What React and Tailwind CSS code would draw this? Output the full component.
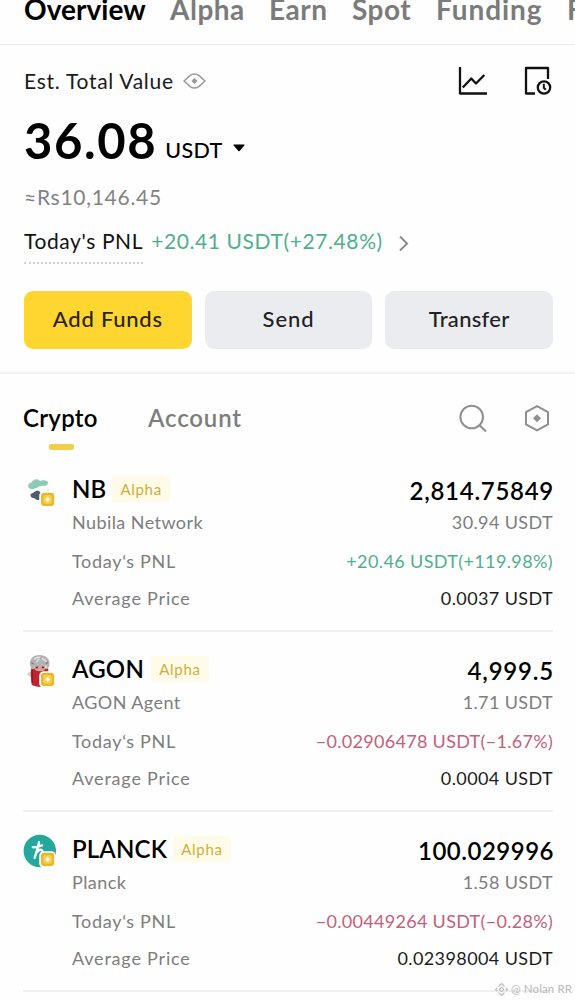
import React from "react";

const tabs = [
  ["Overview", "w-[146px] text-black tracking-[0.05px]"],
  ["Alpha", "w-[99px] text-[#7b7b7b] tracking-[0.5px]"],
  ["Earn", "w-[83px] text-[#7b7b7b] tracking-[0.5px]"],
  ["Spot", "w-[84px] text-[#7b7b7b] tracking-[0.5px]"],
  ["Funding", "w-[131px] text-[#7b7b7b] tracking-[0.9px]"],
  ["Futures", "w-[110px] text-[#7b7b7b]"],
];

function AlphaMark() {
  return (
    <g>
      <rect x="16.2" y="17.200" width="16.600" height="16.600" rx="4.5" fill="#fff" />
      <rect x="18" y="18.800" width="13.200" height="13.200" rx="3" fill="#e6b82b" />
      <rect x="20.2" y="21" width="8.8" height="8.8" rx="2" fill="#f4cd55" />
      <path d="M24.6 22.600l2.8 2.8-2.8 2.8-2.8-2.8z" fill="#fff0b8" />
      <circle cx="24.6" cy="25.4" r="1" fill="#fff" />
    </g>
  );
}

function NubilaIcon() {
  return (
    <svg width="34" height="34" viewBox="0 0 34 34">
      <path d="M5.2 12.800C4.600 10.300 6.300 9 8.400 8.500 9.500 6.600 11.200 5.300 13.400 5.300c1.700 0 2.900.8 3.500 2 1.300-.8 3-1.100 4.800-.9 2.200-.1 3.500 1.100 3.300 2.600-.2 2.200-2.200 3-4.600 2.800-1.500.3-2.700.1-4.100.4-1.100 1.300-2.600 2-4.400 2-1.700 1.700-6 1.300-6.700-1.400z" fill="#8dcbb9" />
      <path d="M7.500 21.300c0-1.600 1.600-2.500 3.300-2.900 1.200-1.400 3.300-2.100 5-1.500 1.800.7 2.600 2.200 2.500 4.600 0 2.700-1 4.400-2.900 4.500-1.500.2-2.700-.5-3.900-1.800-1.900 0-4-1.100-4-2.900z" fill="#4e5c6b" />
      <circle cx="25" cy="16.200" r=".9" fill="#d8d8cf" />
      <AlphaMark />
    </svg>
  );
}

function AgonIcon() {
  return (
    <svg width="34" height="34" viewBox="0 0 34 34">
      <path d="M8 18l-3.500 2.200 3 2z" fill="#eee" stroke="#999" strokeWidth=".6" />
      <path d="M8 14.500h17.200c.6 5 .4 11-.4 17.500-5 1.500-11.500 1.200-16-1-.9-5.500-1.200-11-.8-16.500z" fill="#c0242f" />
      <path d="M9.300 16v13" stroke="#8d1722" strokeWidth="1.200" />
      <path d="M11.500 10.500h11l-.6 5.600c-2.600 1.600-6.800 1.600-9.800 0z" fill="#d3a195" />
      <path d="M7 11C6.200 5.500 9.600 1 16.500 1S27.200 5.500 26.400 11c-.3 2-1.400 3.600-2.700 4.300l-.5-4-3 1.300-.7-2.700-3.300 3-1.300-2.500-3.100 1.900-.6 2.700C9 15.300 7.300 13.300 7 11z" fill="#b1b3b4" />
      <path d="M11 5.500c2-2 4-2.400 6-2.200M19 4.500c2 .5 3.700 1.700 4.400 3.500M13.500 8.500c.6-2 1.600-3 3-3.500" stroke="#dfe0e1" strokeWidth="1.500" fill="none" />
      <path d="M8.500 8.500l2 1.500M25 8l-2.200 1.700" stroke="#777" strokeWidth="1.300" />
      <path d="M12.800 13.500h2M19 13.500h2" stroke="#3a2c2c" strokeWidth="1.500" />
      <AlphaMark />
    </svg>
  );
}

function PlanckIcon() {
  return (
    <svg width="34" height="34" viewBox="0 0 34 34">
      <circle cx="16.800" cy="17" r="16.200" fill="#25a79b" />
      <path d="M16 8.200c-.8 5-2.600 10-4.400 15.600M9.800 13.200c3 .3 6.200-.6 9.200-1.800M13 19.300c1.700-2.500 3.900-4 5.600-3.300 1.500.6.9 2.600.3 4.500-.4 1.500-.7 2.700.2 3.400" fill="none" stroke="#fff" strokeWidth="2.300" strokeLinecap="round" strokeLinejoin="round" />
      <AlphaMark />
    </svg>
  );
}

const coins = [
  {
    Icon: NubilaIcon, symbol: "NB", name: "Nubila Network", badge: "ml-[6px]", symbolTrack: "tracking-[0px]", amountTrack: "tracking-[0.72px]",
    amount: "2,814.75849", value: "30.94 USDT", pnl: "+20.46 USDT(+119.98%)", pnlTrack: "tracking-[0.38px]", pnlColor: "text-[#4db08c]", avg: "0.0037 USDT",
  },
  {
    Icon: AgonIcon, symbol: "AGON", name: "AGON Agent", badge: "ml-[7px]", symbolTrack: "tracking-[0.2px]", amountTrack: "tracking-[0.8px]",
    amount: "4,999.5", value: "1.71 USDT", pnl: "−0.02906478 USDT(−1.67%)", pnlTrack: "tracking-[0.3px]", pnlColor: "text-[#c4607a]", avg: "0.0004 USDT",
  },
  {
    Icon: PlanckIcon, symbol: "PLANCK", name: "Planck", badge: "ml-[6px]", symbolTrack: "tracking-[0.15px]", amountTrack: "tracking-[0.5px]",
    amount: "100.029996", value: "1.58 USDT", pnl: "−0.00449264 USDT(−0.28%)", pnlTrack: "tracking-[0.3px]", pnlColor: "text-[#c4607a]", avg: "0.02398004 USDT",
  },
];

function CoinRow({ coin }) {
  const { Icon } = coin;
  return (
    <li className="flex h-[180px] border-b-2 border-[#f0f0f0] text-[18px] leading-6">
      <div className="w-[49px] shrink-0 pt-[22px]"><Icon /></div>
      <div className="flex-1 pt-6">
        <div className="flex h-[26px] items-center justify-between">
          <div className="flex items-center">
            <span className={`text-[24px] font-semibold text-black ${coin.symbolTrack}`}>{coin.symbol}</span>
            <span className={`flex h-[26px] w-[58px] items-center justify-center rounded-[3px] bg-[#fffbe8] pb-px text-[15px] tracking-[0.7px] text-[#cdb03c] ${coin.badge}`}>Alpha</span>
          </div>
          <span className={`-mr-px pt-[3px] text-[24px] font-semibold text-black ${coin.amountTrack}`}>{coin.amount}</span>
        </div>
        <div className="mt-[8px] flex justify-between text-[#7d7d7d]">
          <span className="tracking-[0.42px]">{coin.name}</span>
          <span className="tracking-[0.38px]">{coin.value}</span>
        </div>
        <div className="mt-[15px] flex justify-between">
          <span className="tracking-[0.68px] text-[#7d7d7d]">Today‘s PNL</span>
          <span className={`${coin.pnlTrack} ${coin.pnlColor}`}>{coin.pnl}</span>
        </div>
        <div className="mt-[13px] flex justify-between">
          <span className="tracking-[0.8px] text-[#7d7d7d]">Average Price</span>
          <span className="tracking-[0.4px] text-[#1c1c1c]">{coin.avg}</span>
        </div>
      </div>
    </li>
  );
}

export default function App() {
  return (
    <div className="relative h-[1000px] w-[575px] overflow-hidden bg-[#fefefe] font-['Lato','Noto_Sans',sans-serif] whitespace-nowrap">
      <nav className="flex h-[45px] overflow-hidden border-b border-[#ebebeb] pl-6">
        {tabs.map(([label, cls]) => (
          <span key={label} className={`h-[19px] shrink-0 text-[28px] leading-[19px] font-bold ${cls}`}>{label}</span>
        ))}
      </nav>

      <section className="h-[329px] border-b-2 border-[#f1f1f1] pr-[22px] pl-6 pt-[20px]">
        <div className="flex h-8 items-center">
          <span className="text-[21px] tracking-[0.72px] text-[#1a1a1a]">Est. Total Value</span>
          <svg className="ml-[9px]" width="23" height="16" viewBox="0 0 23 16" fill="none" stroke="#999" strokeWidth="1.500">
            <path d="M1 8L7.200 2.400Q11.500-.4 15.800 2.400L22 8l-6.200 5.600q-4.300 2.800-8.600 0z" strokeLinejoin="round" />
            <path d="M11.500 4.900L14.600 8l-3.100 3.100L8.400 8z" fill="#999" stroke="none" />
          </svg>
          <svg className="ml-auto" width="30" height="30" viewBox="0 0 30 30" fill="none" stroke="#111" strokeWidth="2.300" strokeLinejoin="round">
            <path d="M2 1v26.500h27M4.800 21.500l8.500-9 4.700 5 8.300-8.500" />
          </svg>
          <svg className="mr-[1px] ml-[35px]" width="29" height="30" viewBox="0 0 29 30" fill="none" stroke="#111" strokeWidth="2.300" strokeLinejoin="round">
            <path d="M25 13V2H3v25.500h9" />
            <circle cx="21" cy="21.500" r="6.200" />
            <path d="M20.800 17.800v4l2 2" strokeWidth="2" />
          </svg>
        </div>
        <div className="mt-[15px] flex h-[56px] items-baseline text-black">
          <span className="text-[49px] leading-[56px] font-bold tracking-[1.6px]">36.08</span>
          <span className="relative -top-px ml-[8px] text-[21.500px] font-medium tracking-[0.35px]">USDT</span>
          <svg className="ml-[10px] self-center" width="12" height="24" viewBox="0 0 12 24"><path d="M.8 15.500h10.400q.8 0 .3.700L6.600 22q-.6.700-1.200 0L.5 16.200q-.5-.7.300-.7z" transform="translate(0 1)" fill="#000" /></svg>
        </div>
        <div className="mt-[13px] h-8 text-[21px] leading-8 tracking-[0.72px] text-[#828282]">≈Rs10,146.45</div>
        <div className="mt-[7px] flex h-[44px] items-start text-[21px] leading-[42px]">
          <span className="h-[44px] border-b-2 border-dotted border-[#d2d2d2] tracking-[0.6px] text-[#111]">Today's PNL</span>
          <span className="ml-[8px] tracking-[0.6px] text-[#4db08c]">+20.41 USDT(+27.48%)</span>
          <svg className="mt-[15px] ml-[15px]" width="11" height="17" viewBox="0 0 11 17" fill="none" stroke="#8b8b8b" strokeWidth="2"><path d="M2 1.500l7 7-7 7" /></svg>
        </div>
        <div className="mt-[27px] grid grid-cols-3 gap-[13px]">
          <button className="h-[58px] rounded-[9px] bg-[#ffd530] pb-[3px] text-[22px] font-medium tracking-[0.75px] text-[#2a2412]">Add Funds</button>
          <button className="h-[58px] rounded-[9px] bg-[#eaecef] pb-[3px] text-[22px] font-medium tracking-[0.9px] text-[#222]">Send</button>
          <button className="h-[58px] rounded-[9px] bg-[#eaecef] pb-[3px] text-[22px] font-medium tracking-[0.3px] text-[#222]">Transfer</button>
        </div>
      </section>

      <section>
        <div className="flex h-[78px] items-start pt-[28px] pr-[25px] pl-[23px]">
          <div className="w-[125px]">
            <div className="text-[24px] leading-[32px] font-semibold tracking-[0.3px] text-black">Crypto</div>
            <div className="mt-[10px] ml-[25.500px] h-[6px] w-[25px] rounded-[2px] bg-[#f0d046]" />
          </div>
          <div className="text-[24px] leading-[32px] font-semibold tracking-[0.850px] text-[#7d7d7d]">Account</div>
          <svg className="mt-px ml-auto" width="30" height="30" viewBox="0 0 30 30" fill="none" stroke="#8f8f8f" strokeWidth="2">
            <circle cx="13.700" cy="14" r="11.300" /><path d="M21.500 22.200l6.500 6.300" />
          </svg>
          <svg className="ml-[36px]" width="26" height="32" viewBox="0 0 26 32" fill="none" stroke="#8f8f8f" strokeWidth="2">
            <path d="M13 4.200L24 10.200v12.200L13 28.400 2 22.400V10.200z" /><path d="M13 12.300l4 4-4 4-4-4z" fill="#8f8f8f" stroke="none" />
          </svg>
        </div>
        <ul className="pr-[22px] pl-[23px]">
          {coins.map((coin) => <CoinRow key={coin.symbol} coin={coin} />)}
        </ul>
      </section>

      <div className="absolute right-[3px] bottom-[3px] flex items-center gap-[3px] text-[11.500px] leading-4 tracking-[0.1px] text-[#b9b9b9]">
        <svg width="13" height="13" viewBox="0 0 13 13" fill="none" stroke="#b9b9b9" strokeWidth="1.100">
          <path d="M3.500 3.500l3-3 3 3M3.500 9.500l3 3 3-3M2.200 4.800L.6 6.500l1.600 1.700M10.800 4.800l1.600 1.700-1.600 1.700M6.500 4.200l2.300 2.300-2.300 2.300-2.300-2.300z" />
        </svg>
        <span>@ Nolan RR</span>
      </div>
    </div>
  );
}
